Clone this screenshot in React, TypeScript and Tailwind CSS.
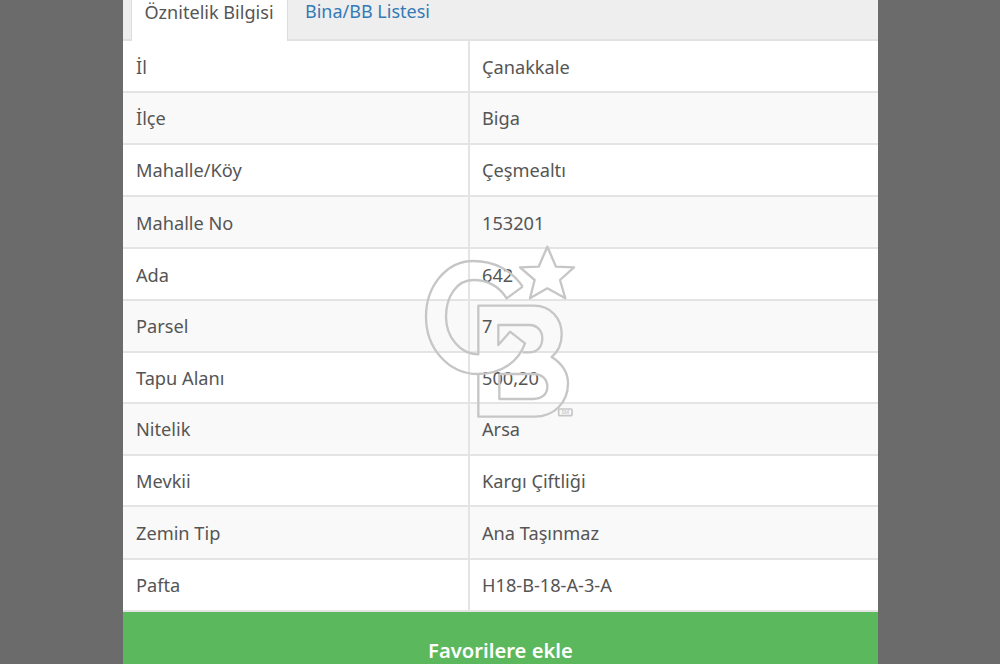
const rows = [
  { label: 'İl', value: 'Çanakkale', h: 'h-[52px]', pt: 'pt-[4px]' },
  { label: 'İlçe', value: 'Biga', h: 'h-[52px]', pt: 'pt-[2px]' },
  { label: 'Mahalle/Köy', value: 'Çeşmealtı', h: 'h-[52px]', pt: 'pt-[2px]' },
  { label: 'Mahalle No', value: '153201', h: 'h-[52px]', pt: 'pt-[4px]' },
  { label: 'Ada', value: '642', h: 'h-[52px]', pt: 'pt-[4px]' },
  { label: 'Parsel', value: '7', h: 'h-[52px]', pt: 'pt-[2px]' },
  { label: 'Tapu Alanı', value: '500,20', h: 'h-[51px]', pt: 'pt-[2px]' },
  { label: 'Nitelik', value: 'Arsa', h: 'h-[52px]', pt: 'pt-[2px]' },
  { label: 'Mevkii', value: 'Kargı Çiftliği', h: 'h-[51px]', pt: 'pt-[2px]' },
  { label: 'Zemin Tip', value: 'Ana Taşınmaz', h: 'h-[53px]', pt: 'pt-[2px]' },
  { label: 'Pafta', value: 'H18-B-18-A-3-A', h: 'h-[52px]', pt: 'pt-[2px]' },
];

const Watermark = () => (
  <svg
    className="absolute left-[410px] top-[235px] pointer-events-none"
    width="180"
    height="195"
    viewBox="0 0 540 585"
    fill="none"
    stroke="#c6c6c6"
    strokeWidth="7"
    strokeLinejoin="round"
  >
    {/* C and B outline, drawn as one line */}
    <path d="M338 155C305 105 250 78 190 78C108 78 48 155 48 245C48 340 115 417 205 417C275 417 325 380 345 325L300 290L265 330V270H358C383 270 397 288 397 310C397 335 382 352 358 352H338" />
    <path d="M338 155L290 190C268 155 232 135 190 135C140 135 108 185 108 245C108 305 150 358 205 358V212H372C422 212 455 250 455 298C455 328 445 350 425 366C455 385 474 412 474 445C474 505 430 545 374 545H205V417" />
    <path d="M268 417H370C395 417 412 432 412 455C412 478 395 492 370 492H268V417" />
    <path d="M412 35L438 95L492 97L450 135L466 190L412 160L360 190L374 135L330 97L386 95Z" />
    <rect x="446" y="522" width="40" height="20" rx="3" strokeWidth="5" />
    <text x="466" y="538" textAnchor="middle" fontSize="16" fill="#bbbbbb" stroke="none">
      SM
    </text>
  </svg>
);

export default function App() {
  return (
    <div className="relative h-[664px] w-[1000px] overflow-hidden bg-[#6b6b6b] font-['Noto_Sans','Open_Sans',sans-serif] text-[18.2px] text-[#555]">
      <div className="ml-[123px] flex h-full w-[755px] flex-col bg-white">
        <div className="flex h-[41px] shrink-0 border-b-2 border-[#e2e2e2] bg-[#eee] pl-2">
          <div className="-mb-[2px] flex h-[41px] w-[157px] items-center justify-center border-x border-[#ddd] bg-white pb-[18px] pr-[1px] text-[18.1px] leading-[20px]">
            Öznitelik Bilgisi
          </div>
          <div className="flex items-center pb-[18px] pl-[17px] text-[18px] leading-[20px] text-[#337ab7]">Bina/BB Listesi</div>
        </div>
        {rows.map((row, i) => (
          <div
            key={row.label}
            className={`flex shrink-0 border-b-2 border-[#e4e4e4] ${row.h} ${i % 2 === 1 ? 'bg-[#f9f9f9]' : 'bg-white'}`}
          >
            <div className={`flex w-[347px] items-center border-r-2 border-[#e4e4e4] pl-[13px] ${row.pt}`}>{row.label}</div>
            <div className={`flex flex-1 items-center pl-[12px] ${row.pt}`}>{row.value}</div>
          </div>
        ))}
        <div className="flex flex-1 items-start justify-center bg-[#5cb85c] pt-[23px] text-[20.2px] font-semibold text-white">
          Favorilere ekle
        </div>
      </div>
      <Watermark />
    </div>
  );
}
